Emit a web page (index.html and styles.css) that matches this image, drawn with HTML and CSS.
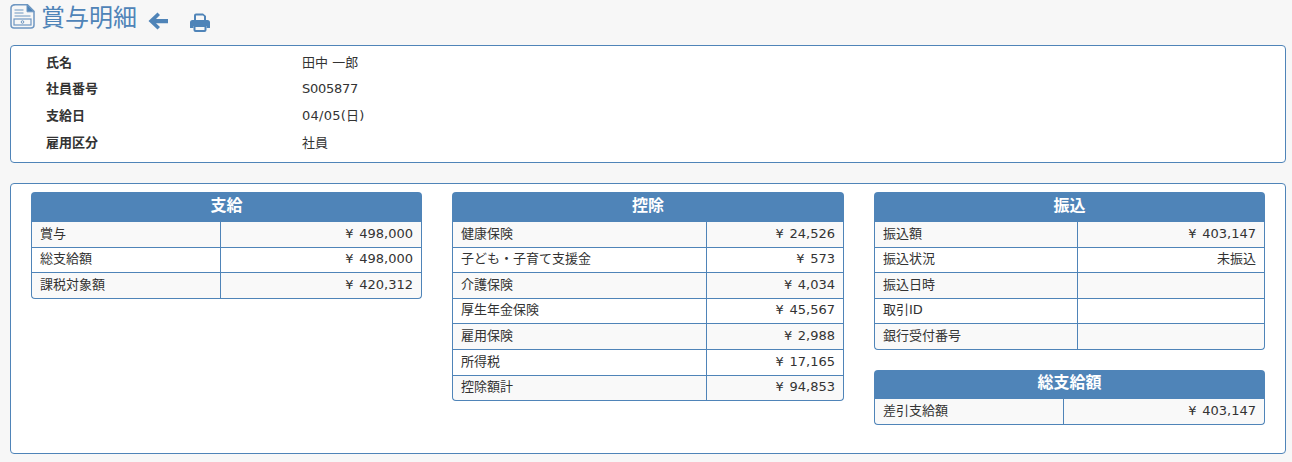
FILE: index.html
```html
<!DOCTYPE html>
<html lang="ja">
<head>
<meta charset="utf-8">
<title>賞与明細</title>
<link rel="stylesheet" href="styles.css">
</head>
<body>
<header class="title-bar">
  <svg class="doc-icon" viewBox="0 0 25 25" width="25" height="25" fill="none" stroke="#6f97c2">
    <path d="M4 .8h13.500l6.500 6.500V21a3 3 0 0 1-3 3H4a3 3 0 0 1-3-3V4a3 3 0 0 1 3-3z" stroke-width="1.500"/>
    <path d="M17 .8v7h7z" fill="#4f84b8"/>
    <path d="M4.500 6h9M4.500 9h9M4.500 12h16" stroke-width="1.200"/>
    <rect x="4" y="15" width="17" height="6" stroke-width="1.200"/>
    <circle cx="12.500" cy="18" r="1.300" stroke-width="1"/>
  </svg>
  <h1 class="title">賞与明細</h1>
  <svg class="back-icon" viewBox="0 0 20 18" width="20" height="18"><path d="M9.500.5l2.500 2.500-4 4h12v4.200H8l4 3.900-2.500 2.500L.5 9z" fill="#4f84b8"/></svg>
  <svg class="print-icon" viewBox="0 0 20 19" width="20" height="19" fill="#4f84b8"><path d="M4 8V2.500A2 2 0 0 1 6 .5h7l3 2.500V8h-2V3.500L13 2.500H6V8z"/><path d="M2.500 7h15A2.500 2.500 0 0 1 20 9.500V15h-3.500v-2h-13v2H0V9.500A2.500 2.500 0 0 1 2.500 7z"/><path d="M3.500 12h13v5a2 2 0 0 1-2 2h-9a2 2 0 0 1-2-2zM5.500 14v3h9v-3z"/></svg>
</header>

<section class="panel info">
  <dl class="info-row"><dt>氏名</dt><dd>田中 一郎</dd></dl>
  <dl class="info-row"><dt>社員番号</dt><dd class="tight">S005877</dd></dl>
  <dl class="info-row"><dt>支給日</dt><dd class="loose">04/05(日)</dd></dl>
  <dl class="info-row"><dt>雇用区分</dt><dd>社員</dd></dl>
</section>

<section class="panel details">
  <div class="col col-pay">
    <table class="sheet">
      <colgroup><col class="c-pay"><col></colgroup>
      <thead><tr><th colspan="2">支給</th></tr></thead>
      <tbody>
        <tr><td class="lbl">賞与</td><td class="val">¥ 498,000</td></tr>
        <tr><td class="lbl">総支給額</td><td class="val">¥ 498,000</td></tr>
        <tr><td class="lbl">課税対象額</td><td class="val">¥ 420,312</td></tr>
      </tbody>
    </table>
  </div>
  <div class="col col-ded">
    <table class="sheet">
      <colgroup><col class="c-ded"><col></colgroup>
      <thead><tr><th colspan="2">控除</th></tr></thead>
      <tbody>
        <tr><td class="lbl">健康保険</td><td class="val">¥ 24,526</td></tr>
        <tr><td class="lbl">子ども・子育て支援金</td><td class="val">¥ 573</td></tr>
        <tr><td class="lbl">介護保険</td><td class="val">¥ 4,034</td></tr>
        <tr><td class="lbl">厚生年金保険</td><td class="val">¥ 45,567</td></tr>
        <tr><td class="lbl">雇用保険</td><td class="val">¥ 2,988</td></tr>
        <tr><td class="lbl">所得税</td><td class="val">¥ 17,165</td></tr>
        <tr><td class="lbl">控除額計</td><td class="val">¥ 94,853</td></tr>
      </tbody>
    </table>
  </div>
  <div class="col col-bank">
    <table class="sheet">
      <colgroup><col class="c-bank"><col></colgroup>
      <thead><tr><th colspan="2">振込</th></tr></thead>
      <tbody>
        <tr><td class="lbl">振込額</td><td class="val">¥ 403,147</td></tr>
        <tr><td class="lbl">振込状況</td><td class="val">未振込</td></tr>
        <tr><td class="lbl">振込日時</td><td class="val"></td></tr>
        <tr><td class="lbl">取引ID</td><td class="val"></td></tr>
        <tr><td class="lbl">銀行受付番号</td><td class="val"></td></tr>
      </tbody>
    </table>
    <table class="sheet sheet-total">
      <colgroup><col class="c-pay"><col></colgroup>
      <thead><tr><th colspan="2">総支給額</th></tr></thead>
      <tbody>
        <tr><td class="lbl">差引支給額</td><td class="val">¥ 403,147</td></tr>
      </tbody>
    </table>
  </div>
</section>
</body>
</html>
```
FILE: styles.css
```css
* { box-sizing: border-box; }
html, body { margin: 0; padding: 0; }
body {
  height: 462px;
  overflow: hidden;
  background: #f7f7f7;
  color: #333;
  font-family: "DejaVu Sans", "Noto Sans CJK JP", sans-serif;
  font-size: 13px;
  padding: 0 6px 0 10px;
}
.title-bar {
  height: 45px;
  display: flex;
  align-items: flex-start;
  padding-top: 4px;
}
.doc-icon { flex: none; }
.title {
  margin: -2px 0 0 6px;
  font-size: 24px;
  line-height: 28px;
  font-weight: 400;
  color: #4f84b8;
  width: 95px;
  white-space: nowrap;
  font-family: "Noto Sans CJK JP", sans-serif;
}
.back-icon { margin: 8px 0 0 12px; }
.print-icon { margin: 9px 0 0 22px; }
.panel {
  background: #fff;
  border: 1px solid #4f84b8;
  border-radius: 4px;
}
.info {
  height: 118px;
  padding: 3.500px 0 0 35px;
}
.info-row {
  margin: 0;
  display: flex;
  height: 26.700px;
  line-height: 26.700px;
}
.info-row dt { width: 256px; font-weight: 700; }
.info-row dd { margin: 0; }
.info-row .tight { letter-spacing: -.25px; }
.info-row .loose { letter-spacing: .25px; }
.details {
  margin-top: 20px;
  height: 271px;
  display: flex;
  padding: 8px 0 0 20px;
}
.col-pay { width: 391px; }
.col-ded { width: 392px; margin-left: 30px; }
.col-bank { width: 391px; margin-left: 30px; }
.sheet {
  width: 100%;
  border-collapse: separate;
  border-spacing: 0;
  table-layout: fixed;
}
.c-pay { width: 189px; }
.c-ded { width: 254px; }
.c-bank { width: 203px; }
.sheet th {
  height: 30px;
  padding: 0 0 3px;
  line-height: 20px;
  background: #4f84b8;
  color: #fff;
  font-size: 16px;
  font-weight: 700;
  text-align: center;
  border-radius: 4px 4px 0 0;
}
.sheet td {
  height: 25.600px;
  padding: 0 8px 2.500px;
  line-height: 19px;
  border-bottom: 1px solid #4f84b8;
  background: #fff;
  white-space: nowrap;
}
.sheet tr:nth-child(odd) td { background: #f9f9f9; }
.lbl { border-left: 1px solid #4f84b8; }
.val {
  border-left: 1px solid #4f84b8;
  border-right: 1px solid #4f84b8;
  text-align: right;
  word-spacing: 1.500px;
}
.sheet tbody tr:last-child .lbl { border-bottom-left-radius: 4px; }
.sheet tbody tr:last-child .val { border-bottom-right-radius: 4px; }
.sheet-total { margin-top: 20px; }
.sheet-total th { height: 29px; }
```
